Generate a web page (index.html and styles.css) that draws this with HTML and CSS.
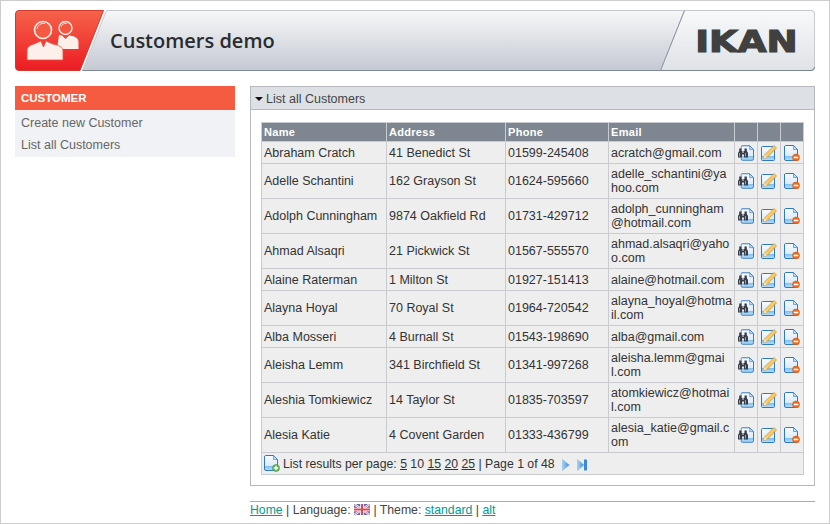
FILE: index.html
```html
<!DOCTYPE html>
<html lang="en">
<head>
<meta charset="utf-8">
<title>Customers demo</title>
<link rel="stylesheet" href="styles.css">
</head>
<body>
<svg class="defs" width="0" height="0" aria-hidden="true">
  <defs>
    <linearGradient id="paper" x1="0" y1="0" x2="0" y2="1"><stop offset="0" stop-color="#f7fbff"/><stop offset=".7" stop-color="#dcebf9"/><stop offset=".71" stop-color="#7fc0f0"/><stop offset="1" stop-color="#bfe0f8"/></linearGradient>
    <linearGradient id="pencil" x1="0" y1="0" x2="1" y2="1"><stop offset="0" stop-color="#fde59a"/><stop offset="1" stop-color="#eeae35"/></linearGradient>
    <linearGradient id="arrow" x1="0" y1="0" x2="1" y2="0"><stop offset="0" stop-color="#a9d0f3"/><stop offset="1" stop-color="#3d8bd8"/></linearGradient>
    <symbol id="doc" viewBox="0 0 14 16">
      <path d="M1.500.5H9.500L13.500 4.500V14a1.500 1.500 0 0 1-1.500 1.500H2A1.500 1.500 0 0 1 .5 14V2A1.500 1.500 0 0 1 1.500.5Z" fill="url(#paper)" stroke="#2f78c4"/>
      <path d="M9.500.5V4.500H13.500Z" fill="#c4ddf4" stroke="#2f78c4" stroke-width=".6"/>
    </symbol>
    <symbol id="i-view" viewBox="0 0 16 16">
      <use href="#doc" x="2.500" y="0" width="13.500" height="16"/>
      <path d="M1.200 3.500h2.300v2.500H4.500V8h1V6h1V3.500h2.300V6L10 8v4.500H6V9.500H4v3H0V8L1.200 6Z" fill="#3a3d45"/>
      <path d="M1.500 8v3.500M7.500 8v3.500" stroke="#a5adb8" stroke-width=".9"/>
    </symbol>
    <symbol id="i-edit" viewBox="0 0 16 16">
      <rect x=".5" y="1.500" width="13" height="14" rx="1" fill="url(#paper)" stroke="#2f78c4"/>
      <path d="M13 .5l2.500 2.500L6 12.500l-3.500 1 1-3.500Z" fill="url(#pencil)" stroke="#cf9425" stroke-width=".7"/>
      <path d="M5 9l2 2" stroke="#f9d76c" stroke-width="1"/>
      <path d="M3.500 10l2.500 2.500-3.500 1Z" fill="#f7e3bd"/>
    </symbol>
    <symbol id="i-del" viewBox="0 0 16 16">
      <use href="#doc" x="0" y="0" width="14" height="16"/>
      <circle cx="12" cy="12.500" r="3.500" fill="#ef6a1f" stroke="#cf5512" stroke-width=".6"/>
      <rect x="9.700" y="11.700" width="4.600" height="1.600" fill="#fff"/>
    </symbol>
    <symbol id="i-new" viewBox="0 0 16 17">
      <use href="#doc" x="0" y="0" width="14" height="16"/>
      <circle cx="12" cy="13" r="3.500" fill="#62b45a" stroke="#3f8f3d" stroke-width=".6"/>
      <path d="M12 10.800v4.400M9.800 13h4.400" stroke="#fff" stroke-width="1.300"/>
    </symbol>
  </defs>
</svg>

<div class="page">
  <header class="banner">
    <svg class="banner-art" viewBox="0 0 800 61" width="800" height="61" aria-hidden="true">
      <defs>
        <linearGradient id="red" x1="0" y1="0" x2="0" y2="1"><stop offset="0" stop-color="#f6634a"/><stop offset="1" stop-color="#ec1c24"/></linearGradient>
        <linearGradient id="grey" x1="0" y1="0" x2="0" y2="1"><stop offset="0" stop-color="#f6f7f8"/><stop offset="1" stop-color="#c5c9d2"/></linearGradient>
        <linearGradient id="pale" x1="0" y1="0" x2="0" y2="1"><stop offset="0" stop-color="#f8f9fa"/><stop offset="1" stop-color="#dfe2e7"/></linearGradient>
      </defs>
      <path d="M91.500.5H796a3.500 3.500 0 0 1 3.500 3.500V57a3.500 3.500 0 0 1-3.500 3.500H67.500Z" fill="url(#grey)" stroke="#c6cad0"/>
      <path d="M67.500 60.500H796a3.500 3.500 0 0 0 3.500-3.500" fill="none" stroke="#7d8792"/>
      <path d="M669.500.5H796a3.500 3.500 0 0 1 3.500 3.500V57a3.500 3.500 0 0 1-3.500 3.500H645.500Z" fill="url(#pale)" stroke="#c6cad0"/>
      <path d="M645.500 60.500H796a3.500 3.500 0 0 0 3.500-3.500" fill="none" stroke="#7d8792"/>
      <path d="M669.500.5 645.500 60.500" stroke="#8e96a0" fill="none"/>
      <path d="M4 .5H88.500L65 60.500H4A3.500 3.500 0 0 1 .5 57V4A3.500 3.500 0 0 1 4 .5Z" fill="url(#red)" stroke="#d23a2c"/>
      <path d="M44 25l3 .5 3.500 3.500 3.500-3.500 3.500.5c4 1 6 3 6 6V39H42Z" fill="#fdf0ea"/>
      <circle cx="50.500" cy="18" r="6.500" fill="#f4553f" stroke="#fdf0ea" stroke-width="1.400"/>
      <path d="M46 17a5 5 0 0 1 6-3.500" fill="none" stroke="#fdf0ea" stroke-width=".8"/>
      <path d="M12 50V41c0-4 3-6 7-7l7-3 2.500 6 2.500-6 7 3c5 1 10 3 10 7v9Z" fill="#fdf0ea" stroke="#f2483a" stroke-width=".8"/>
      <circle cx="28" cy="20" r="8.500" fill="#f55a42" stroke="#fdf0ea" stroke-width="1.600"/>
      <path d="M22 19a6.500 6.500 0 0 1 8-5.500" fill="none" stroke="#fdf0ea" stroke-width=".9"/>
    </svg>
    <h1 class="title">Customers demo</h1>
    <span class="logo">IKAN</span>
  </header>

  <div class="content">
    <nav class="side">
      <h2 class="side-head">CUSTOMER</h2>
      <ul class="side-list">
        <li>Create new Customer</li>
        <li>List all Customers</li>
      </ul>
    </nav>

    <main class="main">
      <section class="panel">
        <h2 class="panel-head"><span class="caret"></span>List all Customers</h2>
        <div class="panel-body">
          <table class="grid">
            <colgroup><col class="c-name"><col class="c-addr"><col class="c-phone"><col class="c-mail"><col class="c-ico"><col class="c-ico"><col class="c-ico"></colgroup>
            <thead><tr><th>Name</th><th>Address</th><th>Phone</th><th>Email</th><th></th><th></th><th></th></tr></thead>
            <tbody>
              <tr class="r22"><td>Abraham Cratch</td><td>41 Benedict St</td><td>01599-245408</td><td>acratch@gmail.com</td><td class="ic"><svg class="ico"><use href="#i-view"/></svg></td><td class="ic"><svg class="ico"><use href="#i-edit"/></svg></td><td class="ic"><svg class="ico"><use href="#i-del"/></svg></td></tr>
              <tr class="r35"><td>Adelle Schantini</td><td>162 Grayson St</td><td>01624-595660</td><td>adelle_schantini@ya<br>hoo.com</td><td class="ic"><svg class="ico"><use href="#i-view"/></svg></td><td class="ic"><svg class="ico"><use href="#i-edit"/></svg></td><td class="ic"><svg class="ico"><use href="#i-del"/></svg></td></tr>
              <tr class="r35"><td>Adolph Cunningham</td><td>9874 Oakfield Rd</td><td>01731-429712</td><td>adolph_cunningham<br>@hotmail.com</td><td class="ic"><svg class="ico"><use href="#i-view"/></svg></td><td class="ic"><svg class="ico"><use href="#i-edit"/></svg></td><td class="ic"><svg class="ico"><use href="#i-del"/></svg></td></tr>
              <tr class="r35"><td>Ahmad Alsaqri</td><td>21 Pickwick St</td><td>01567-555570</td><td>ahmad.alsaqri@yaho<br>o.com</td><td class="ic"><svg class="ico"><use href="#i-view"/></svg></td><td class="ic"><svg class="ico"><use href="#i-edit"/></svg></td><td class="ic"><svg class="ico"><use href="#i-del"/></svg></td></tr>
              <tr class="r22"><td>Alaine Raterman</td><td>1 Milton St</td><td>01927-151413</td><td>alaine@hotmail.com</td><td class="ic"><svg class="ico"><use href="#i-view"/></svg></td><td class="ic"><svg class="ico"><use href="#i-edit"/></svg></td><td class="ic"><svg class="ico"><use href="#i-del"/></svg></td></tr>
              <tr class="r35"><td>Alayna Hoyal</td><td>70 Royal St</td><td>01964-720542</td><td>alayna_hoyal@hotma<br>il.com</td><td class="ic"><svg class="ico"><use href="#i-view"/></svg></td><td class="ic"><svg class="ico"><use href="#i-edit"/></svg></td><td class="ic"><svg class="ico"><use href="#i-del"/></svg></td></tr>
              <tr class="r22"><td>Alba Mosseri</td><td>4 Burnall St</td><td>01543-198690</td><td>alba@gmail.com</td><td class="ic"><svg class="ico"><use href="#i-view"/></svg></td><td class="ic"><svg class="ico"><use href="#i-edit"/></svg></td><td class="ic"><svg class="ico"><use href="#i-del"/></svg></td></tr>
              <tr class="r35"><td>Aleisha Lemm</td><td>341 Birchfield St</td><td>01341-997268</td><td>aleisha.lemm@gmai<br>l.com</td><td class="ic"><svg class="ico"><use href="#i-view"/></svg></td><td class="ic"><svg class="ico"><use href="#i-edit"/></svg></td><td class="ic"><svg class="ico"><use href="#i-del"/></svg></td></tr>
              <tr class="r35"><td>Aleshia Tomkiewicz</td><td>14 Taylor St</td><td>01835-703597</td><td>atomkiewicz@hotmai<br>l.com</td><td class="ic"><svg class="ico"><use href="#i-view"/></svg></td><td class="ic"><svg class="ico"><use href="#i-edit"/></svg></td><td class="ic"><svg class="ico"><use href="#i-del"/></svg></td></tr>
              <tr class="r35"><td>Alesia Katie</td><td>4 Covent Garden</td><td>01333-436799</td><td>alesia_katie@gmail.c<br>om</td><td class="ic"><svg class="ico"><use href="#i-view"/></svg></td><td class="ic"><svg class="ico"><use href="#i-edit"/></svg></td><td class="ic"><svg class="ico"><use href="#i-del"/></svg></td></tr>
            </tbody>
            <tfoot>
              <tr><td colspan="7" class="foot">
                <div class="pager">
                  <svg class="ico-new"><use href="#i-new"/></svg>
                  <span>List results per page: <u>5</u> 10 <u>15</u> <u>20</u> <u>25</u> | Page 1 of 48</span>
                  <svg class="nav-next" viewBox="0 0 8 12"><path d="M.5.500l7 5.500-7 5.500Z" fill="url(#arrow)" stroke="#8fbdea" stroke-width=".6"/></svg>
                  <svg class="nav-last" viewBox="0 0 10 12"><path d="M.5.500l6.500 5.500-6.500 5.500Z" fill="url(#arrow)" stroke="#8fbdea" stroke-width=".6"/><rect x="7" y=".5" width="3" height="11" fill="#3d8bd8"/></svg>
                </div>
              </td></tr>
            </tfoot>
          </table>
        </div>
      </section>
      <footer class="foot-bar">
        <a href="#">Home</a> | Language:
        <svg class="flag" viewBox="0 0 16 11" aria-label="UK flag"><rect width="16" height="11" fill="#5a6db8"/><path d="M0 0l16 11M16 0L0 11" stroke="#fff" stroke-width="2.200"/><path d="M0 0l16 11M16 0L0 11" stroke="#d8596a" stroke-width=".8"/><path d="M8 0v11M0 5.500h16" stroke="#fff" stroke-width="3.600"/><path d="M8 0v11M0 5.500h16" stroke="#d8495a" stroke-width="2"/></svg>
        | Theme: <a href="#">standard</a> | <a href="#">alt</a>
      </footer>
    </main>
  </div>
</div>
</body>
</html>
```
FILE: styles.css
```css
* { box-sizing: border-box; }
html, body { margin: 0; padding: 0; background: #fff; }
body { font-family: "Liberation Sans", Arial, sans-serif; font-size: 12.5px; color: #333; }
.defs { position: absolute; }
.page { width: 830px; height: 524px; border: 1px solid #ccc; padding: 9px 14px 0; overflow: hidden; }

.banner { position: relative; height: 61px; display: flex; align-items: center; justify-content: space-between; padding: 0 17px 0 95px; }
.banner-art { position: absolute; left: 0; top: 0; }
.title { position: relative; margin: 0; font: 600 20px "Open Sans", sans-serif; color: #2a2c30; padding-bottom: 1px; }
.logo { position: relative; margin-top: 1px; font: 700 30px "DejaVu Sans", sans-serif; color: #404040; -webkit-text-stroke: 1.2px #404040; transform: scaleX(1.24); transform-origin: right center; }

.content { display: flex; gap: 15px; margin-top: 15px; }
.side { width: 220px; flex: none; }
.side-head { margin: 0; height: 24px; padding-left: 6px; background: #f55b40; color: #fff; font-size: 11.5px; font-weight: 700; line-height: 24px; }
.side-list { margin: 0; padding: 2px 6px 1px; list-style: none; background: #f1f2f5; font-size: 12.5px; color: #666; }
.side-list li { height: 22px; line-height: 22px; }

.main { width: 565px; flex: none; }
.panel { border: 1px solid #b5b8bd; height: 400px; }
.panel-head { margin: 0; height: 23px; display: flex; align-items: center; padding: 2px 0 0 4px; background: #dde0e5; border-bottom: 1px solid #b5b8bd; font-size: 12.5px; font-weight: 400; color: #444; }
.caret { width: 0; height: 0; border: 4px solid transparent; border-top: 4px solid #111; border-bottom: 0; margin-right: 3px; }
.panel-body { padding: 12px 10px 0; }

.grid { width: 543px; table-layout: fixed; border-collapse: collapse; background: #eee; color: #333; font-size: 12.5px; }
.c-name { width: 125px; } .c-addr { width: 119px; } .c-phone { width: 103px; } .c-mail { width: 126px; } .c-ico { width: 23px; }
.grid th, .grid td { border: 1px solid #c8ccd0; padding: 0 2px; text-align: left; vertical-align: middle; }
.grid th { height: 19px; background: #7e8791; color: #fff; font-size: 11px; font-weight: 700; letter-spacing: .3px; }
.r22 td { height: 22px; }
.r35 td { height: 35px; line-height: 14px; }
.grid .ic { padding: 0 0 0 1px; text-align: center; }
.ico { display: block; width: 16px; height: 16px; margin: 0 0 0 2px; }
.grid .foot { height: 22px; background: #eee; padding: 0 2px; font-size: 12.25px; }
.pager { display: flex; align-items: center; }
.ico-new { width: 16px; height: 17px; margin-right: 3px; }
.nav-next { width: 8px; height: 12px; margin-left: 7px; margin-top: 2px; }
.nav-last { width: 10px; height: 12px; margin-left: 7px; margin-top: 2px; }

.foot-bar { margin-top: 15px; border-top: 1px solid #aaa; padding-top: 1px; font-size: 12.25px; color: #444; line-height: 15px; }
.foot-bar a { color: #009a8e; }
.flag { width: 16px; height: 11px; vertical-align: -1px; }
```
